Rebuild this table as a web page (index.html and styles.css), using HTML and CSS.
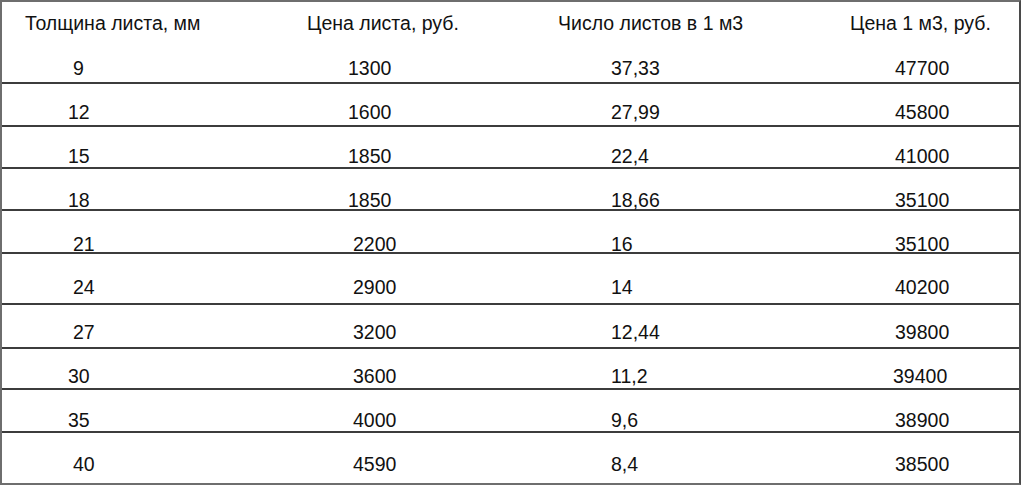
FILE: index.html
```html
<!DOCTYPE html>
<html lang="ru">
<head>
<meta charset="utf-8">
<title>Цены листов</title>
<link rel="stylesheet" href="styles.css">
</head>
<body>
<div class="table">
  <div class="row head">
    <div class="cell c1">Толщина листа, мм</div>
    <div class="cell c2">Цена листа, руб.</div>
    <div class="cell c3">Число листов в 1 м3</div>
    <div class="cell c4">Цена 1 м3, руб.</div>
  </div>
  <div class="row">
    <div class="cell c1 sh">9</div>
    <div class="cell c2">1300</div>
    <div class="cell c3">37,33</div>
    <div class="cell c4">47700</div>
  </div>
  <div class="row">
    <div class="cell c1">12</div>
    <div class="cell c2">1600</div>
    <div class="cell c3">27,99</div>
    <div class="cell c4">45800</div>
  </div>
  <div class="row">
    <div class="cell c1">15</div>
    <div class="cell c2">1850</div>
    <div class="cell c3">22,4</div>
    <div class="cell c4">41000</div>
  </div>
  <div class="row">
    <div class="cell c1">18</div>
    <div class="cell c2">1850</div>
    <div class="cell c3">18,66</div>
    <div class="cell c4">35100</div>
  </div>
  <div class="row">
    <div class="cell c1 sh">21</div>
    <div class="cell c2 sh">2200</div>
    <div class="cell c3">16</div>
    <div class="cell c4">35100</div>
  </div>
  <div class="row">
    <div class="cell c1 sh">24</div>
    <div class="cell c2 sh">2900</div>
    <div class="cell c3">14</div>
    <div class="cell c4">40200</div>
  </div>
  <div class="row">
    <div class="cell c1 sh">27</div>
    <div class="cell c2 sh">3200</div>
    <div class="cell c3">12,44</div>
    <div class="cell c4">39800</div>
  </div>
  <div class="row">
    <div class="cell c1">30</div>
    <div class="cell c2 sh">3600</div>
    <div class="cell c3">11,2</div>
    <div class="cell c4 back">39400</div>
  </div>
  <div class="row">
    <div class="cell c1">35</div>
    <div class="cell c2 sh">4000</div>
    <div class="cell c3">9,6</div>
    <div class="cell c4">38900</div>
  </div>
  <div class="row last">
    <div class="cell c1 sh">40</div>
    <div class="cell c2 sh">4590</div>
    <div class="cell c3">8,4</div>
    <div class="cell c4">38500</div>
  </div>
</div>
</body>
</html>
```

FILE: styles.css
```css
html, body {
  margin: 0;
  padding: 0;
  background: #ffffff;
}

body {
  font-family: "Liberation Sans", Arial, sans-serif;
  font-size: 19.5px;
  line-height: 20px;
  color: #111111;
  overflow: hidden;
}

.table {
  width: 1021px;
  height: 485px;
  box-sizing: border-box;
  border-top: 2px solid #6e6e6e;
  border-left: 2px solid #6e6e6e;
  border-bottom: 2px solid #6e6e6e;
  border-right: 2px solid #4a4a4a;
}

.row {
  display: grid;
  grid-template-columns: 290px 260px 290px 1fr;
  box-sizing: border-box;
  border-bottom: 2px solid #3c3c3c;
}

.row.head {
  border-bottom: none;
  height: 45px;
  padding-top: 11px;
}

.row.last {
  border-bottom: none;
}

.cell {
  white-space: nowrap;
}

.head .c1 { padding-left: 23px; }
.head .c2 { padding-left: 15px; }
.head .c3 { padding-left: 6px; }
.head .c4 { padding-left: 8px; }

.c1 { padding-left: 66px; }
.c2 { padding-left: 56px; }
.c3 { padding-left: 59px; }
.c4 { padding-left: 53px; }

.c1.sh { padding-left: 71px; }
.c2.sh { padding-left: 61px; }
.c4.back { padding-left: 51px; }

.row:nth-child(2)  { height: 37px; padding-top: 11px; }
.row:nth-child(3)  { height: 43px; padding-top: 18px; }
.row:nth-child(4)  { height: 42px; padding-top: 19px; }
.row:nth-child(5)  { height: 42px; padding-top: 21px; }
.row:nth-child(6)  { height: 43px; padding-top: 23px; }
.row:nth-child(7)  { height: 51px; padding-top: 23px; }
.row:nth-child(8)  { height: 44px; padding-top: 17px; }
.row:nth-child(9)  { height: 41px; padding-top: 17px; }
.row:nth-child(10) { height: 43px; padding-top: 20px; }
.row:nth-child(11) { height: 50px; padding-top: 21px; }
```
